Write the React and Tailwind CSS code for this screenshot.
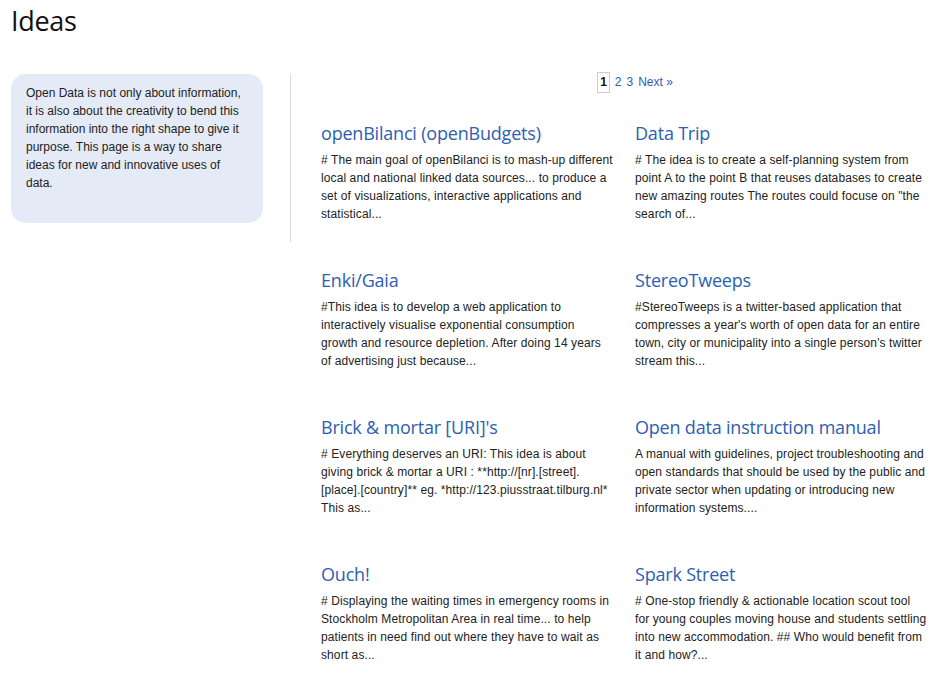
const ideas = [
  {
    title: "openBilanci (openBudgets)",
    text: "# The main goal of openBilanci is to mash-up different local and national linked data sources... to produce a set of visualizations, interactive applications and statistical...",
  },
  {
    title: "Data Trip",
    text: "# The idea is to create a self-planning system from point A to the point B that reuses databases to create new amazing routes The routes could focuse on \"the search of...",
  },
  {
    title: "Enki/Gaia",
    text: "#This idea is to develop a web application to interactively visualise exponential consumption growth and resource depletion. After doing 14 years of advertising just because...",
  },
  {
    title: "StereoTweeps",
    text: "#StereoTweeps is a twitter-based application that compresses a year's worth of open data for an entire town, city or municipality into a single person's twitter stream this...",
  },
  {
    title: "Brick & mortar [URI]'s",
    text: "# Everything deserves an URI: This idea is about giving brick & mortar a URI : **http://[nr].[street].[place].[country]** eg. *http://123.piusstraat.tilburg.nl* This as...",
  },
  {
    title: "Open data instruction manual",
    text: "A manual with guidelines, project troubleshooting and open standards that should be used by the public and private sector when updating or introducing new information systems....",
  },
  {
    title: "Ouch!",
    text: "# Displaying the waiting times in emergency rooms in Stockholm Metropolitan Area in real time... to help patients in need find out where they have to wait as short as...",
  },
  {
    title: "Spark Street",
    text: "# One-stop friendly & actionable location scout tool for young couples moving house and students settling into new accommodation. ## Who would benefit from it and how?...",
  },
];

function IdeaCard({ title, text }) {
  return (
    <div className="w-[292px]">
      <a href="#" className="block text-[18px] leading-[26px] text-[#2d60b2] font-['Open_Sans',sans-serif] tracking-[-0.2px]">
        {title}
      </a>
      <p className="mt-[5px] text-[12px] leading-[18px] tracking-[0.1px] text-[#222]">{text}</p>
    </div>
  );
}

export default function App() {
  return (
    <div className="min-h-[699px] bg-white px-[11px] font-['Liberation_Sans',Arial,sans-serif] text-[#222]">
      <h1 className="pt-[3px] text-[27px] leading-[36px] text-[#111] font-['Open_Sans',sans-serif] tracking-[-0.3px]">
        Ideas
      </h1>

      <div className="mt-[35px] flex items-start">
        {/* Sidebar */}
        <div className="h-[168px] w-[280px] shrink-0 border-r border-[#dcdcdc]">
          <div className="w-[252px] rounded-[15px] bg-[#e4ebf7] pl-[15px] pr-[19px] pt-[10px] pb-[31px]">
            <p className="text-[12px] leading-[18px] text-[#222]">
              Open Data is not only about information, it is also about the creativity to bend this information into the right shape to give it purpose. This page is a way to share ideas for new and innovative uses of data.
            </p>
          </div>
        </div>

        {/* Main */}
        <div className="ml-[30px] w-[616px] shrink-0">
          <div className="-mt-[2px] flex items-center justify-center gap-[5px] pl-[12px] text-[12px] leading-[19px]">
            <span className="border border-[#ccc] px-[2px] font-bold text-[#111]">1</span>
            <a href="#" className="text-[#2d60b2]">2</a>
            <a href="#" className="text-[#2d60b2]">3</a>
            <a href="#" className="text-[#2d60b2]">Next »</a>
          </div>

          <div className="mt-[27px] grid grid-cols-[314px_1fr] gap-y-[44px]">
            {ideas.map((idea) => (
              <IdeaCard key={idea.title} {...idea} />
            ))}
          </div>
        </div>
      </div>
    </div>
  );
}
